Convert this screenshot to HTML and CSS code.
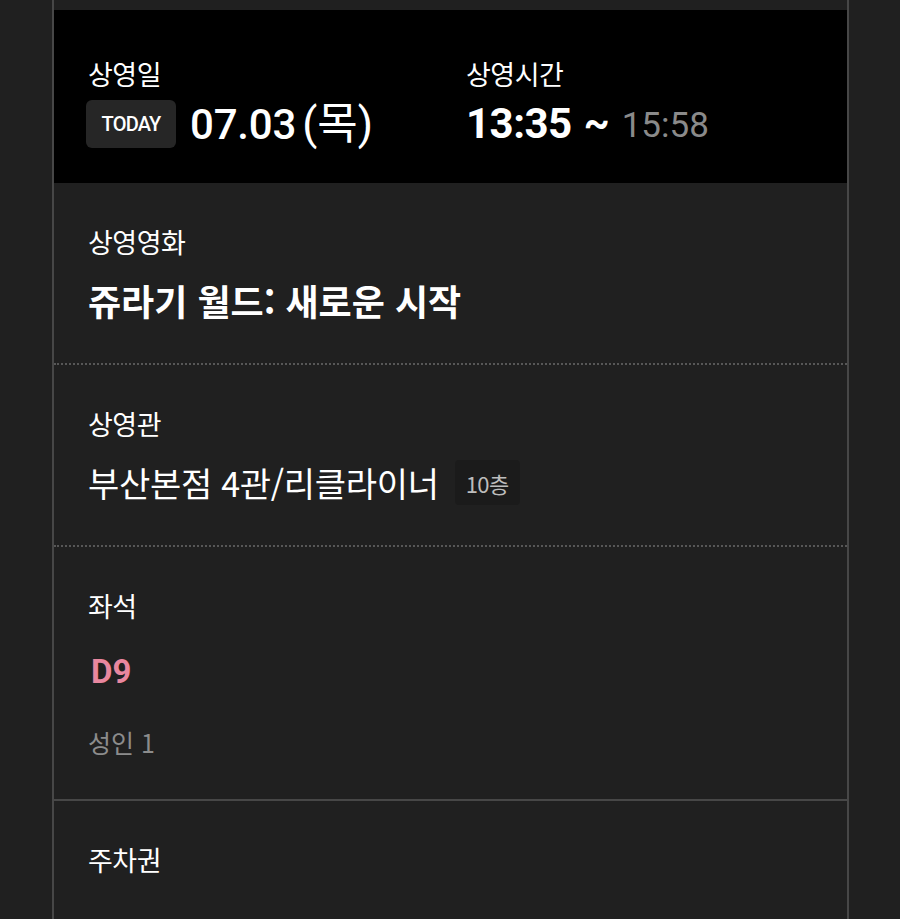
FILE: index.html
```html
<!DOCTYPE html>
<html lang="ko">
<head>
<meta charset="utf-8">
<title>예매 정보</title>
<link rel="stylesheet" href="styles.css">
</head>
<body>
<div class="card">
  <div class="spacer"></div>
  <div class="head">
    <div class="col col-date">
      <div class="label">상영일</div>
      <div class="row">
        <span class="today">TODAY</span>
        <span class="date">07.03<span class="dow">(목)</span></span>
      </div>
    </div>
    <div class="col col-time">
      <div class="label">상영시간</div>
      <div class="row">
        <span class="start">13:35</span>
        <span class="tilde">~</span>
        <span class="end">15:58</span>
      </div>
    </div>
  </div>
  <div class="sec dotted">
    <div class="label">상영영화</div>
    <div class="title">쥬라기 월드: 새로운 시작</div>
  </div>
  <div class="sec dotted">
    <div class="label">상영관</div>
    <div class="row theater-row">
      <span class="theater">부산본점 4관/리클라이너</span>
      <span class="floor">10층</span>
    </div>
  </div>
  <div class="sec solid">
    <div class="label">좌석</div>
    <div class="seat">D9</div>
    <div class="people">성인 1</div>
  </div>
  <div class="sec">
    <div class="label">주차권</div>
  </div>
</div>
</body>
</html>
```
FILE: styles.css
```css
html, body {
  margin: 0;
  padding: 0;
  background: #202020;
}
body {
  font-family: Roboto, "Noto Sans CJK KR", sans-serif;
  color: #ffffff;
  height: 919px;
  overflow: hidden;
}
.card {
  margin-left: 52px;
  width: 793px;
  border-left: 2px solid #474747;
  border-right: 2px solid #474747;
  min-height: 919px;
  background: #202020;
}
.spacer {
  height: 10px;
}
.head {
  background: #000;
  height: 173px;
  box-sizing: border-box;
  padding: 47px 34px 0;
  display: grid;
  grid-template-columns: 378px 1fr;
}
.label {
  font-size: 27px;
  line-height: 34px;
  color: #fff;
  font-family: "Noto Sans CJK KR", sans-serif;
  letter-spacing: -0.5px;
}
.row {
  display: flex;
  align-items: center;
}
.col .row {
  margin-top: 9px;
  height: 48px;
}
.today {
  display: inline-flex;
  align-items: center;
  justify-content: center;
  width: 90px;
  height: 48px;
  background: #262626;
  border-radius: 6px;
  font-size: 20px;
  font-weight: 500;
  letter-spacing: -0.8px;
  margin-left: -2px;
}
.date {
  margin-left: 14px;
  font-size: 42px;
  font-weight: 500;
  letter-spacing: -0.2px;
  line-height: 48px;
}
.dow {
  margin-left: 6px;
  font-size: 44px;
  font-weight: 400;
  letter-spacing: 0;
}
.start {
  font-size: 42px;
  font-weight: 700;
  letter-spacing: -0.5px;
  line-height: 48px;
}
.tilde {
  font-size: 40px;
  font-weight: 700;
  margin-left: 12px;
  line-height: 48px;
}
.end {
  font-size: 35px;
  font-weight: 400;
  color: #8a8a8a;
  margin-left: 12px;
  line-height: 48px;
  position: relative;
  top: 2px;
}
.sec {
  padding: 42px 34px 40px;
}
.dotted {
  border-bottom: 2px dotted #575757;
}
.solid {
  border-bottom: 2px solid #474747;
}
.title {
  margin-top: 18px;
  font-size: 36px;
  font-weight: 700;
  line-height: 46px;
  font-family: "Noto Sans CJK KR", sans-serif;
  letter-spacing: 0;
}
.theater-row {
  margin-top: 19px;
  height: 45px;
}
.theater {
  font-size: 34px;
  line-height: 45px;
  font-family: "Noto Sans CJK KR", sans-serif;
  letter-spacing: -0.3px;
}
.floor {
  margin-left: 16px;
  height: 45px;
  padding: 0 11px;
  display: inline-flex;
  align-items: center;
  background: #1b1b1b;
  border-radius: 4px;
  color: #bdbdbd;
  font-size: 22px;
  font-family: "Noto Sans CJK KR", sans-serif;
  letter-spacing: -0.5px;
}
.seat {
  margin-top: 27px;
  font-size: 33px;
  font-weight: 700;
  line-height: 44px;
  color: #e9879f;
  padding-left: 3px;
}
.people {
  margin-top: 31px;
  font-size: 25px;
  line-height: 34px;
  color: #8c8c8c;
  font-family: "Noto Sans CJK KR", sans-serif;
}
```
